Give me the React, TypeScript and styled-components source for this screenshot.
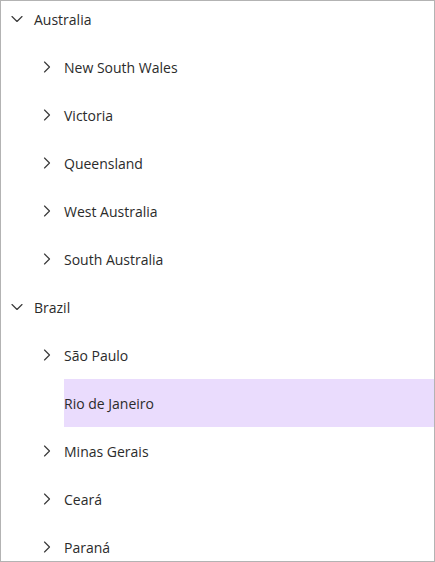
import React from "react";
import styled, { createGlobalStyle } from "styled-components";
import { ChevronDown, ChevronRight } from "lucide-react";

const Global = createGlobalStyle`
  html, body { margin: 0; padding: 0; background: #fff; }
  body { font-family: "Open Sans", "Noto Sans", sans-serif; }
`;

const Frame = styled.div`
  width: 435px;
  height: 562px;
  box-sizing: border-box;
  border: 1px solid #b3b3b3;
  overflow: hidden;
  background: #fff;
`;

const List = styled.ul`
  list-style: none;
  margin: -6px 0 0 0;
  padding: 0;
`;

const Row = styled.li<{ $level: number }>`
  display: flex;
  align-items: center;
  height: 48px;
  padding-left: ${(p) => 6 + p.$level * 30}px;
  color: #2b2b2b;
  font-size: 14px;
`;

const Toggle = styled.span`
  width: 20px;
  height: 20px;
  display: flex;
  align-items: center;
  justify-content: center;
  color: #3a3a3a;
  flex: none;
`;

const Label = styled.span<{ $selected?: boolean }>`
  flex: 1;
  align-self: stretch;
  display: flex;
  align-items: center;
  margin-left: 7px;
  background: ${(p) => (p.$selected ? "#eadcfd" : "transparent")};
`;

type Node = { label: string; children?: Node[]; open?: boolean; selected?: boolean; leaf?: boolean };

const data: Node[] = [
  {
    label: "Australia",
    open: true,
    children: [
      { label: "New South Wales" },
      { label: "Victoria" },
      { label: "Queensland" },
      { label: "West Australia" },
      { label: "South Australia" },
    ],
  },
  {
    label: "Brazil",
    open: true,
    children: [
      { label: "São Paulo" },
      { label: "Rio de Janeiro", leaf: true, selected: true },
      { label: "Minas Gerais" },
      { label: "Ceará" },
      { label: "Paraná" },
    ],
  },
];

function renderNodes(nodes: Node[], level: number): React.ReactNode[] {
  const out: React.ReactNode[] = [];
  nodes.forEach((n, i) => {
    out.push(
      <Row key={`${level}-${n.label}-${i}`} $level={level}>
        <Toggle>
          {n.leaf ? null : n.open ? (
            <ChevronDown size={20} strokeWidth={1.4} />
          ) : (
            <ChevronRight size={20} strokeWidth={1.4} />
          )}
        </Toggle>
        <Label $selected={n.selected}>{n.label}</Label>
      </Row>
    );
    if (n.open && n.children) out.push(...renderNodes(n.children, level + 1));
  });
  return out;
}

export default function App() {
  return (
    <>
      <Global />
      <Frame>
        <List>{renderNodes(data, 0)}</List>
      </Frame>
    </>
  );
}
